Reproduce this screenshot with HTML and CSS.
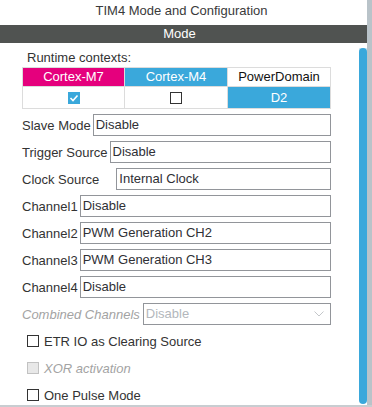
FILE: index.html
```html
<!DOCTYPE html>
<html>
<head>
<meta charset="utf-8">
<link rel="stylesheet" href="styles.css">
</head>
<body>
<div class="app">
  <div class="main">
    <div class="title">TIM4 Mode and Configuration</div>
    <div class="bar">Mode</div>
    <div class="content">
      <div class="rc-label">Runtime contexts:</div>
      <div class="ctx-table">
        <div class="cell head m7">Cortex-M7</div>
        <div class="cell head m4">Cortex-M4</div>
        <div class="cell head pd">PowerDomain</div>
        <div class="cell"><span class="cb checked"><svg width="12" height="12" viewBox="0 0 12 12"><polyline points="2.5,6 5,8.5 9.5,3.5" fill="none" stroke="#fff" stroke-width="1.6"/></svg></span></div>
        <div class="cell"><span class="cb"></span></div>
        <div class="cell d2">D2</div>
      </div>
      <div class="form">
        <div class="row"><span class="lbl">Slave Mode</span><div class="field">Disable</div></div>
        <div class="row"><span class="lbl">Trigger Source</span><div class="field">Disable</div></div>
        <div class="row"><span class="lbl">Clock Source</span><div class="field field-clock">Internal Clock</div></div>
        <div class="row"><span class="lbl">Channel1</span><div class="field">Disable</div></div>
        <div class="row"><span class="lbl">Channel2</span><div class="field">PWM Generation CH2</div></div>
        <div class="row"><span class="lbl">Channel3</span><div class="field">PWM Generation CH3</div></div>
        <div class="row"><span class="lbl">Channel4</span><div class="field">Disable</div></div>
        <div class="row"><span class="lbl lbl-disabled">Combined Channels</span><div class="field field-select"><span>Disable</span><svg class="chev" width="10" height="6" viewBox="0 0 10 6"><polyline points="0.5,0.5 5,5 9.5,0.5" fill="none" stroke="#c4c7ca" stroke-width="1"/></svg></div></div>
        <div class="check-row"><span class="box"></span><span>ETR IO as Clearing Source</span></div>
        <div class="check-row disabled"><span class="box"></span><span>XOR activation</span></div>
        <div class="check-row"><span class="box"></span><span>One Pulse Mode</span></div>
      </div>
    </div>
  </div>
  <div class="strip"></div>
  <div class="track"><div class="thumb"></div></div>
</div>
</body>
</html>
```

FILE: styles.css
```css
html, body {
  margin: 0;
  padding: 0;
  background: #fff;
}
body {
  font-family: "Liberation Sans", Arial, sans-serif;
  font-size: 13px;
  color: #333;
}
.app {
  position: relative;
  display: flex;
  width: 372px;
  height: 407px;
  box-sizing: border-box;
  border-bottom: 2px solid #c8cdd1;
  overflow: hidden;
}
.main {
  flex: 1;
  min-width: 0;
}
.strip {
  width: 5px;
  background: #b9c3c9;
}
.title {
  height: 25px;
  line-height: 22px;
  text-align: center;
  padding-right: 4px;
  color: #3a3a3a;
}
.bar {
  height: 18px;
  line-height: 18px;
  background: #505351;
  color: #fff;
  text-align: center;
  padding-right: 8px;
}
.content {
  padding: 6px 0 0 22px;
}
.rc-label {
  line-height: 18px;
  padding-left: 5px;
}
.ctx-table {
  display: grid;
  grid-template-columns: 101px 102px 102px;
  grid-template-rows: 18px 21px;
  gap: 1px;
  width: 307px;
  border: 1px solid #dcdcdc;
  background: #dcdcdc;
}
.cell {
  background: #fff;
  display: flex;
  align-items: center;
  justify-content: center;
}
.head {
  line-height: 18px;
}
.m7 {
  background: #e5007d;
  color: #fff;
}
.m4 {
  background: #3aa8db;
  color: #fff;
}
.pd {
  color: #111;
}
.d2 {
  background: #3aa8db;
  color: #fff;
}
.cb {
  display: block;
  width: 12px;
  height: 12px;
  box-sizing: border-box;
  border: 1px solid #333;
  background: #fff;
}
.cb.checked {
  border: none;
  background: #3aa8db;
}
.cb svg {
  display: block;
}
.form {
  margin-top: 5px;
  width: 309px;
  display: flex;
  flex-direction: column;
  gap: 5px;
}
.row {
  display: flex;
  align-items: center;
  height: 22px;
  gap: 2px;
}
.lbl {
  white-space: nowrap;
}
.lbl-disabled {
  color: #a3a3a3;
  font-style: italic;
  margin-right: 1px;
}
.field {
  flex: 1;
  height: 22px;
  box-sizing: border-box;
  border: 1px solid #92959a;
  padding-left: 2px;
  line-height: 20px;
  color: #2f3035;
  white-space: nowrap;
  overflow: hidden;
}
.field-clock {
  margin-left: 15px;
}
.field-select {
  display: flex;
  align-items: center;
  justify-content: space-between;
  padding-right: 6px;
  color: #b3b7bc;
}
.chev {
  display: block;
}
.check-row {
  display: flex;
  align-items: center;
  height: 22px;
  gap: 5px;
  padding-left: 5px;
}
.box {
  width: 12px;
  height: 12px;
  box-sizing: border-box;
  border: 1px solid #333;
  background: #fff;
}
.check-row.disabled {
  color: #a3a3a3;
  font-style: italic;
}
.check-row.disabled .box {
  border-color: #c2c2c2;
  background: #e8e8e8;
}
.track {
  position: absolute;
  left: 359px;
  top: 48px;
  width: 8px;
  height: 357px;
  background: linear-gradient(#d3e8f5 0, #d3e8f5 6px, transparent 6px);
}
.thumb {
  width: 8px;
  height: 356px;
  background: #3aa8db;
  border-radius: 4px;
}
```
